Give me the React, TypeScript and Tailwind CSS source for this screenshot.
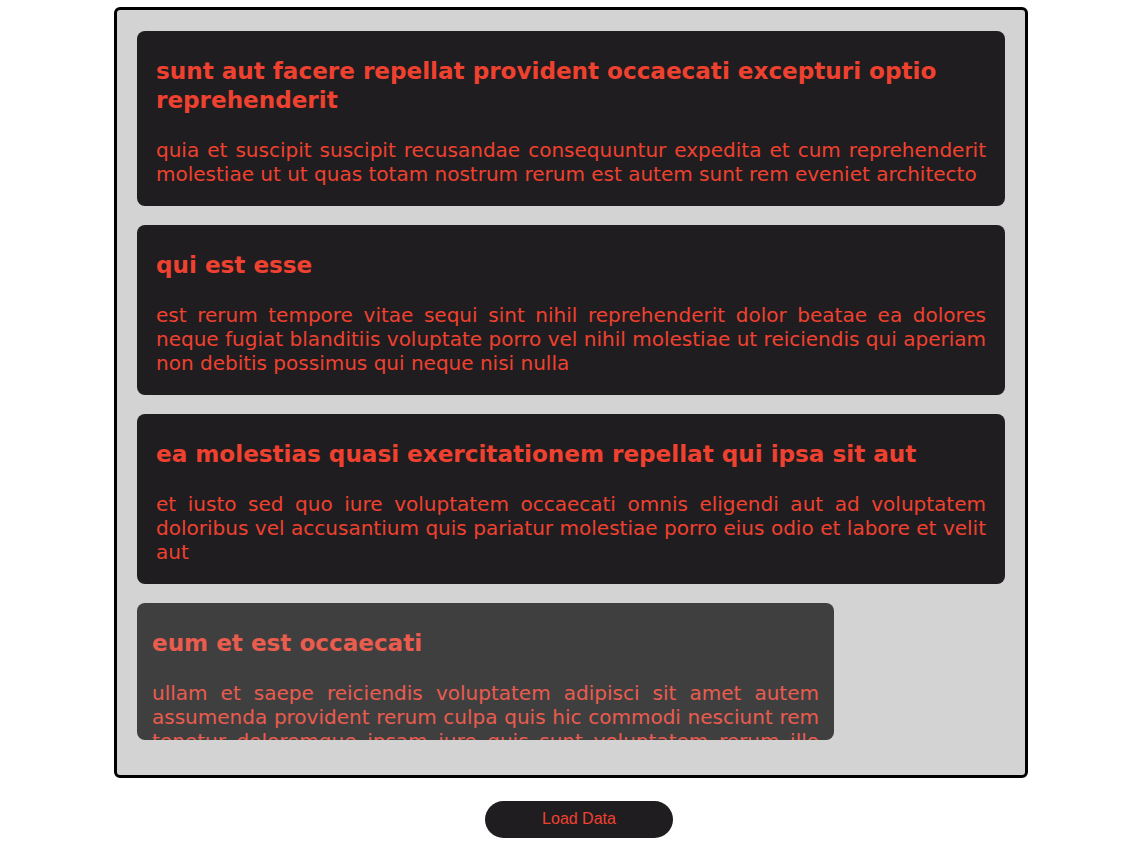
import React from "react";

const posts = [
  {
    title: "sunt aut facere repellat provident occaecati excepturi optio reprehenderit",
    body: "quia et suscipit suscipit recusandae consequuntur expedita et cum reprehenderit molestiae ut ut quas totam nostrum rerum est autem sunt rem eveniet architecto",
  },
  {
    title: "qui est esse",
    body: "est rerum tempore vitae sequi sint nihil reprehenderit dolor beatae ea dolores neque fugiat blanditiis voluptate porro vel nihil molestiae ut reiciendis qui aperiam non debitis possimus qui neque nisi nulla",
  },
  {
    title: "ea molestias quasi exercitationem repellat qui ipsa sit aut",
    body: "et iusto sed quo iure voluptatem occaecati omnis eligendi aut ad voluptatem doloribus vel accusantium quis pariatur molestiae porro eius odio et labore et velit aut",
  },
];

const last = {
  title: "eum et est occaecati",
  body: "ullam et saepe reiciendis voluptatem adipisci sit amet autem assumenda provident rerum culpa quis hic commodi nesciunt rem tenetur doloremque ipsam iure quis sunt voluptatem rerum illo velit",
};

export default function App() {
  return (
    <div className="w-[1131px] min-h-[852px] bg-white font-['DejaVu_Sans',Verdana,sans-serif]">
      <div className="pt-[7px] pl-[114px]">
        <div className="w-[914px] border-[3px] border-black rounded-md bg-[#d3d3d3] pt-[21px] px-[20px] pb-[35px] flex flex-col gap-[18.5px]">
          {posts.map((p, i) => (
            <div key={i} className="bg-[#1f1d1f] rounded-lg px-[19px] pt-[19px] pb-[20px] text-[#ef4130]">
              <h2 className="mt-[7px] mb-[24px] text-[23.1px] leading-[28.5px] font-bold">{p.title}</h2>
              <p className="text-[20px] leading-[24px] text-justify">{p.body}</p>
            </div>
          ))}
          <div className="w-[697px] h-[137px] overflow-hidden bg-[#1f1d1f] opacity-[0.81] rounded-lg px-[15px] pt-[19px] text-[#ef4130]">
            <h2 className="mt-[7px] mb-[24px] text-[23.1px] leading-[28.5px] font-bold">{last.title}</h2>
            <p className="text-[20px] leading-[24px] text-justify">{last.body}</p>
          </div>
        </div>
      </div>
      <div className="pt-[23px] pl-[485px]">
        <button className="w-[188px] h-[37px] rounded-full bg-[#1f1d1f] text-[#ef4130] text-[16px] font-['Liberation_Sans',Arial,sans-serif]">
          Load Data
        </button>
      </div>
    </div>
  );
}
